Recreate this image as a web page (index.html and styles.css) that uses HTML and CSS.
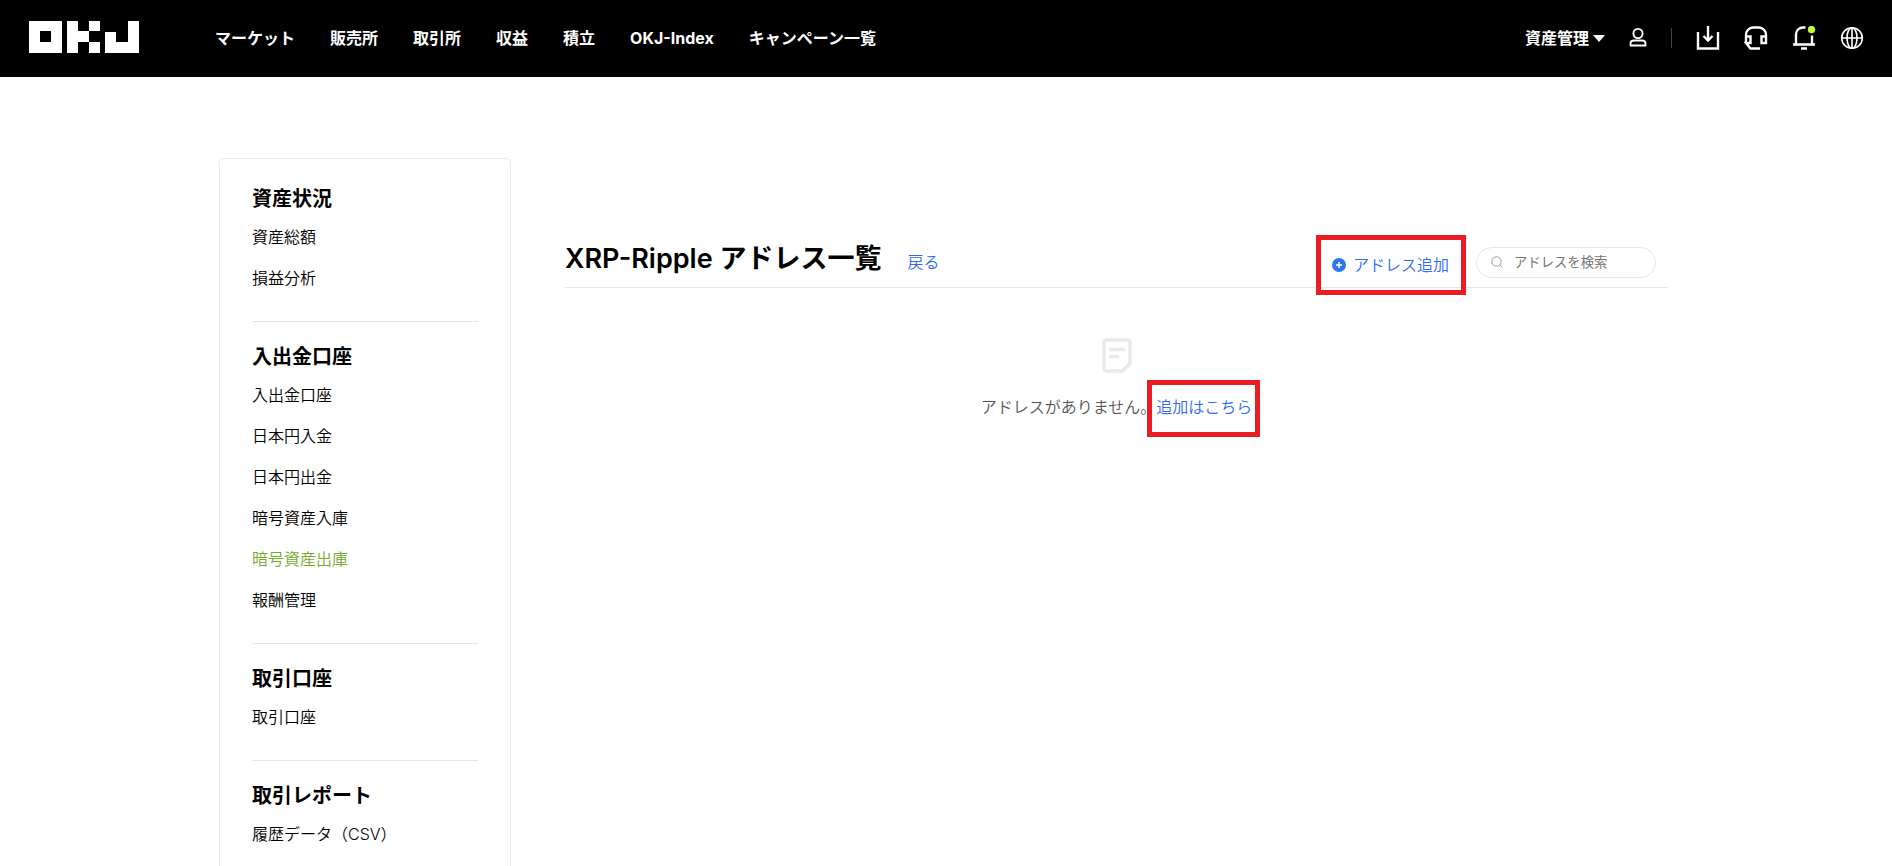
FILE: index.html
```html
<!DOCTYPE html>
<html lang="ja">
<head>
<meta charset="UTF-8">
<meta name="viewport" content="width=device-width, initial-scale=1.0">
<title>XRP-Ripple アドレス一覧 | OKJ</title>
<link rel="stylesheet" href="styles.css">
</head>
<body>
<header class="header">
    <a class="logo" href="#" aria-label="OKJ">
        <svg width="110" height="32" viewBox="0 0 110 32" fill="#fff" shape-rendering="crispEdges">
            <path fill-rule="evenodd" d="M0 0h33v32H0zM11 10v11h11V10z"/>
            <path d="M38 0h11v10h11v11H49v11H38zM60 0h11v10H60zM60 21h11v11H60z"/>
            <path d="M76 11h11v10h12V0h11v32H76z"/>
        </svg>
    </a>
    <nav class="nav">
        <a href="#">マーケット</a>
        <a href="#">販売所</a>
        <a href="#">取引所</a>
        <a href="#">収益</a>
        <a href="#">積立</a>
        <a href="#">OKJ-Index</a>
        <a href="#">キャンペーン一覧</a>
    </nav>
    <div class="tools">
        <button class="assets" type="button">資産管理
            <svg width="12" height="8" viewBox="0 0 12 8" fill="#fff"><path d="M0 1h12L6 8z"/></svg>
        </button>
        <button class="user" type="button" aria-label="アカウント">
            <svg width="18" height="20" viewBox="0 0 18 20" fill="none" stroke="#fff" stroke-width="1.800">
                <circle cx="9" cy="5.500" r="4.600"/>
                <path d="M1.500 17.500v-2c0-2 1.500-3 3.500-3h8c2 0 3.500 1 3.500 3v2z"/>
            </svg>
        </button>
        <span class="separator"></span>
        <button type="button" aria-label="ダウンロード">
            <svg width="24" height="24" viewBox="0 0 24 24" fill="none" stroke="#fff" stroke-width="2.400">
                <path d="M2 6v16.500h20V6M12 0v14M7.500 10l4.500 4.500 4.500-4.500"/>
            </svg>
        </button>
        <button type="button" aria-label="サポート">
            <svg width="24" height="24" viewBox="0 0 24 24" fill="none" stroke="#fff" stroke-width="2.400">
                <path d="M2 17V9c0-4 3-7.500 7-7.500h6c4 0 7 3.500 7 7.500v8h-4.500v-6.500H22M2 10.500h4.500V17H2l4.500 5.500H16"/>
            </svg>
        </button>
        <button type="button" aria-label="お知らせ">
            <svg width="24" height="24" viewBox="0 0 24 24" fill="none" stroke="#fff" stroke-width="2.400">
                <path d="M13.500 1.500H11c-4 0-7 3-7 7V18M20 9.500V18M1 18.500h22M9 22.500h6"/>
                <circle cx="19.500" cy="3.500" r="3.700" fill="#bcff2f" stroke="none"/>
            </svg>
        </button>
        <button type="button" aria-label="言語">
            <svg width="24" height="24" viewBox="0 0 24 24" fill="none" stroke="#fff" stroke-width="1.600">
                <circle cx="12" cy="12" r="10.300"/>
                <ellipse cx="12" cy="12" rx="5" ry="10.300"/>
                <path d="M12 1.500v21M2 12h20"/>
            </svg>
        </button>
    </div>
</header>

<div class="container">
    <aside class="sidebar">
        <section class="group">
            <h2>資産状況</h2>
            <ul>
                <li><a href="#">資産総額</a></li>
                <li><a href="#">損益分析</a></li>
            </ul>
        </section>
        <section class="group">
            <h2>入出金口座</h2>
            <ul>
                <li><a href="#">入出金口座</a></li>
                <li><a href="#">日本円入金</a></li>
                <li><a href="#">日本円出金</a></li>
                <li><a href="#">暗号資産入庫</a></li>
                <li><a class="active" href="#">暗号資産出庫</a></li>
                <li><a href="#">報酬管理</a></li>
            </ul>
        </section>
        <section class="group">
            <h2>取引口座</h2>
            <ul>
                <li><a href="#">取引口座</a></li>
            </ul>
        </section>
        <section class="group">
            <h2>取引レポート</h2>
            <ul>
                <li><a href="#">履歴データ（CSV）</a></li>
            </ul>
        </section>
    </aside>

    <main class="main">
        <div class="title-bar">
            <h1>XRP-Ripple アドレス一覧</h1>
            <a class="back" href="#">戻る</a>
            <a class="add marked" href="#">
                <svg width="14" height="14" viewBox="0 0 14 14">
                    <circle cx="7" cy="7" r="7" fill="#2f75ee"/>
                    <path d="M7 4v6M4 7h6" stroke="#fff" stroke-width="1.500"/>
                </svg>
                アドレス追加
            </a>
            <div class="search">
                <svg width="12" height="12" viewBox="0 0 12 12" fill="none" stroke="#999">
                    <circle cx="5.500" cy="5.500" r="4.700"/>
                    <path d="M9 9l2.500 2.500"/>
                </svg>
                <input type="text" placeholder="アドレスを検索" aria-label="アドレスを検索">
            </div>
        </div>
        <div class="empty">
            <svg width="30" height="35" viewBox="0 0 30 35" fill="none" stroke="#e9e9e9">
                <path d="M4.500 2h21Q28 2 28 4.500v21L20.500 33h-16Q2 33 2 30.500v-26Q2 2 4.500 2z" stroke-width="3.400"/>
                <path d="M7 11.500h16M7 18.500h10" stroke-width="3.600"/>
            </svg>
            <p>アドレスがありません。<a class="marked" href="#">追加はこちら</a></p>
        </div>
    </main>
</div>
</body>
</html>
```
FILE: styles.css
```css
* {
    box-sizing: border-box;
}
body {
    margin: 0;
    font-family: Inter, "Noto Sans CJK JP", sans-serif;
    font-size: 16px;
    line-height: 24px;
    color: #000;
    background-color: #fff;
}
a {
    color: #2f6bee;
    text-decoration: none;
}
button {
    display: flex;
    align-items: center;
    padding: 0;
    border: 0;
    background: none;
    color: #fff;
    font: inherit;
    cursor: pointer;
}
svg {
    display: block;
    flex-shrink: 0;
}
.header {
    display: flex;
    align-items: center;
    height: 77px;
    padding: 0 28px 2px 29px;
    background-color: #000;
    font-weight: 700;
}
.logo {
    margin-right: 76px;
    padding-bottom: 2px;
}
.nav {
    display: flex;
    gap: 35px;
}
.nav a {
    color: #fff;
    white-space: nowrap;
}
.tools {
    display: flex;
    align-items: center;
    gap: 24px;
    margin-left: auto;
}
.assets {
    gap: 4px;
    white-space: nowrap;
}
.separator {
    width: 1px;
    height: 20px;
    background-color: #444;
}
.container {
    display: flex;
    align-items: flex-start;
    gap: 54px;
    max-width: 1454px;
    margin: 81px auto 0;
}
.sidebar {
    flex: 0 0 292px;
    padding: 5px 32px 0;
    border: 1px solid #e9e9e9;
    border-radius: 5px;
}
.group {
    padding: 20px 0 22px;
}
.group + .group {
    border-top: 1px solid #e6e6e6;
}
.group h2 {
    margin: 0 0 3px;
    font-size: 20px;
    line-height: 30px;
    font-weight: 600;
}
.group ul {
    margin: 0;
    padding: 0;
    list-style: none;
}
.group li {
    line-height: 41px;
}
.group a {
    color: #000;
    font-weight: 350;
}
.group a.active {
    color: #74ab2c;
}
.main {
    flex: 1;
    margin-right: 5px;
    padding-top: 78px;
    font-weight: 350;
}
.title-bar {
    display: flex;
    align-items: center;
    height: 52px;
    padding-right: 12px;
    border-bottom: 1px solid #e6e6e6;
}
.title-bar h1 {
    margin: 0 26px 5px 0;
    font-size: 27px;
    line-height: 40px;
    font-weight: 600;
}
.add {
    display: flex;
    align-items: center;
    gap: 7px;
    margin-top: 6px;
    margin-left: auto;
}
/* red frame over the links to press */
.marked {
    position: relative;
}
.marked::after {
    content: "";
    position: absolute;
    inset: -17px -8px -20px -9px;
    border: 5px solid #ed1c24;
    pointer-events: none;
}
.add::after {
    inset: -18px -17px -18px -16px;
}
.search {
    display: flex;
    align-items: center;
    gap: 11px;
    width: 180px;
    height: 31px;
    margin-top: 1px;
    margin-left: 27px;
    padding: 0 14px;
    border: 1px solid #e6e6e6;
    border-radius: 16px;
}
.search input {
    flex: 1;
    min-width: 0;
    padding: 0;
    border: 0;
    outline: 0;
    background: none;
    font-family: inherit;
}
.search input::placeholder {
    color: #757575;
}
.empty {
    display: flex;
    flex-direction: column;
    align-items: center;
    gap: 22px;
    padding-top: 50px;
}
.empty p {
    margin: 0;
    color: #555;
}
```
